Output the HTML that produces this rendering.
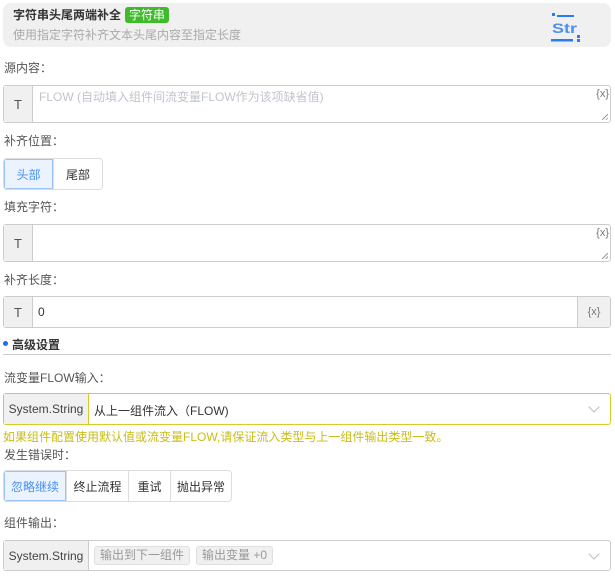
<!DOCTYPE html>
<html><head><meta charset="utf-8"><style>
*{box-sizing:border-box;margin:0;padding:0}
body{width:615px;height:577px;background:#fff;font-family:"Liberation Sans","Noto Sans CJK SC",sans-serif;font-size:12px;color:#333;position:relative;overflow:hidden}
.a{position:absolute}
.lbl{position:absolute;left:4px;font-size:12px;color:#555;line-height:14px}
.box{position:absolute;left:3px;width:608px;border:1px solid #ccc;border-radius:3px;background:#fff}
.tc{position:absolute;left:0;top:0;bottom:0;width:29px;background:#f0f0f0;border-right:1px solid #ccc;display:flex;align-items:center;justify-content:center;color:#555;font-size:13px}
.vx{position:absolute;right:1px;top:2px;font-size:11px;color:#777}
.rs{position:absolute;right:2px;bottom:2px;width:6px;height:6px;background:linear-gradient(135deg,transparent 45%,#999 45%,#999 55%,transparent 55%,transparent 75%,#999 75%,#999 85%,transparent 85%)}
.btns{position:absolute;left:3px;display:flex;border:1px solid #ddd;border-radius:4px;overflow:hidden}
.btns div{display:flex;align-items:center;justify-content:center;border-left:1px solid #ddd;color:#333;font-size:12px}
.btns div:first-child{border-left:none;background:#eaf3ff;color:#4a90f0;box-shadow:inset 0 0 0 1px #9cc3f5}
.sc{position:absolute;left:0;top:0;bottom:0;width:85px;background:#f0f0f0;border-right:1px solid #ccc;display:flex;align-items:center;justify-content:center;color:#444;font-size:12px}
.chev{position:absolute;right:12px;top:9px;width:8px;height:8px;border-right:1px solid #bbb;border-bottom:1px solid #bbb;transform:rotate(45deg)}
.tag{position:absolute;top:5px;height:19px;background:#f0f0f0;border:1px solid #e0e0e0;border-radius:3px;color:#999;font-size:12px;line-height:17px;padding:0 5px}
</style></head><body>
<div class="a" style="left:3px;top:3px;width:608px;height:44px;background:#f0f0f0;border-radius:8px"></div>
<div class="a" style="left:13px;top:8px;font-weight:bold;font-size:12px;color:#333;line-height:15px">字符串头尾两端补全</div>
<div class="a" style="left:125px;top:7px;width:44px;height:16px;background:#3fba2a;border-radius:3px;color:#fff;font-size:12px;line-height:16px;text-align:center">字符串</div>
<div class="a" style="left:13px;top:28px;color:#aaa;font-size:12px;line-height:15px">使用指定字符补齐文本头尾内容至指定长度</div>
<svg class="a" style="left:548px;top:10px" width="40" height="35" viewBox="0 0 40 35">
<rect x="4" y="3" width="3" height="3" fill="#2a7cf6"/><rect x="9" y="5" width="17" height="2" fill="#2a7cf6"/>
<text x="4" y="23" font-family="Liberation Sans,sans-serif" font-weight="bold" font-size="14" textLength="25" lengthAdjust="spacingAndGlyphs" fill="#4a8ff8">Str</text>
<rect x="3" y="29" width="22" height="2.5" fill="#2a7cf6"/><rect x="29" y="25" width="3" height="3" fill="#2a7cf6"/><rect x="29" y="29" width="3" height="3" fill="#2a7cf6"/>
</svg>

<div class="lbl" style="top:61px">源内容：</div>
<div class="box" style="top:85px;height:38px"><div class="tc">T</div><div class="a" style="left:35px;top:2px;color:#c0c4cc;font-size:12px">FLOW (自动填入组件间流变量FLOW作为该项缺省值)</div><div class="vx">{x}</div><div class="rs"></div></div>

<div class="lbl" style="top:134px">补齐位置：</div>
<div class="btns" style="top:158px;height:32px"><div style="width:49px">头部</div><div style="width:49px">尾部</div></div>

<div class="lbl" style="top:200px">填充字符：</div>
<div class="box" style="top:224px;height:38px"><div class="tc">T</div><div class="vx">{x}</div><div class="rs"></div></div>

<div class="lbl" style="top:273px">补齐长度：</div>
<div class="box" style="top:296px;height:32px"><div class="tc">T</div><div class="a" style="left:34px;top:8px;color:#333;font-size:12px">0</div><div class="a" style="right:0;top:0;bottom:0;width:33px;background:#f0f0f0;border-left:1px solid #ccc;display:flex;align-items:center;justify-content:center;color:#777;font-size:11px">{x}</div></div>

<div class="a" style="left:3px;top:341px;width:5px;height:5px;border-radius:50%;background:#1a6ef5"></div>
<div class="a" style="left:12px;top:336px;font-weight:bold;font-size:12px;color:#333">高级设置</div>
<div class="a" style="left:3px;top:354px;width:608px;height:1px;background:#ccc"></div>

<div class="lbl" style="top:371px">流变量FLOW输入：</div>
<div class="box" style="top:393px;height:32px;border-color:#d4cc2a"><div class="sc" style="border-right-color:#d4cc2a">System.String</div><div class="a" style="left:90px;top:8px;color:#333">从上一组件流入（FLOW)</div><div class="chev"></div></div>
<div class="a" style="left:3px;top:428px;color:#c9bd16;font-size:12px">如果组件配置使用默认值或流变量FLOW,请保证流入类型与上一组件输出类型一致。</div>
<div class="lbl" style="top:448px">发生错误时：</div>
<div class="btns" style="top:470px;height:32px"><div style="width:62px">忽略继续</div><div style="width:62px">终止流程</div><div style="width:42px">重试</div><div style="width:61px">抛出异常</div></div>

<div class="lbl" style="top:516px">组件输出：</div>
<div class="box" style="top:540px;height:31px"><div class="sc">System.String</div><div class="tag" style="left:90px">输出到下一组件</div><div class="tag" style="left:192px">输出变量 +0</div><div class="chev"></div></div>
</body></html>
